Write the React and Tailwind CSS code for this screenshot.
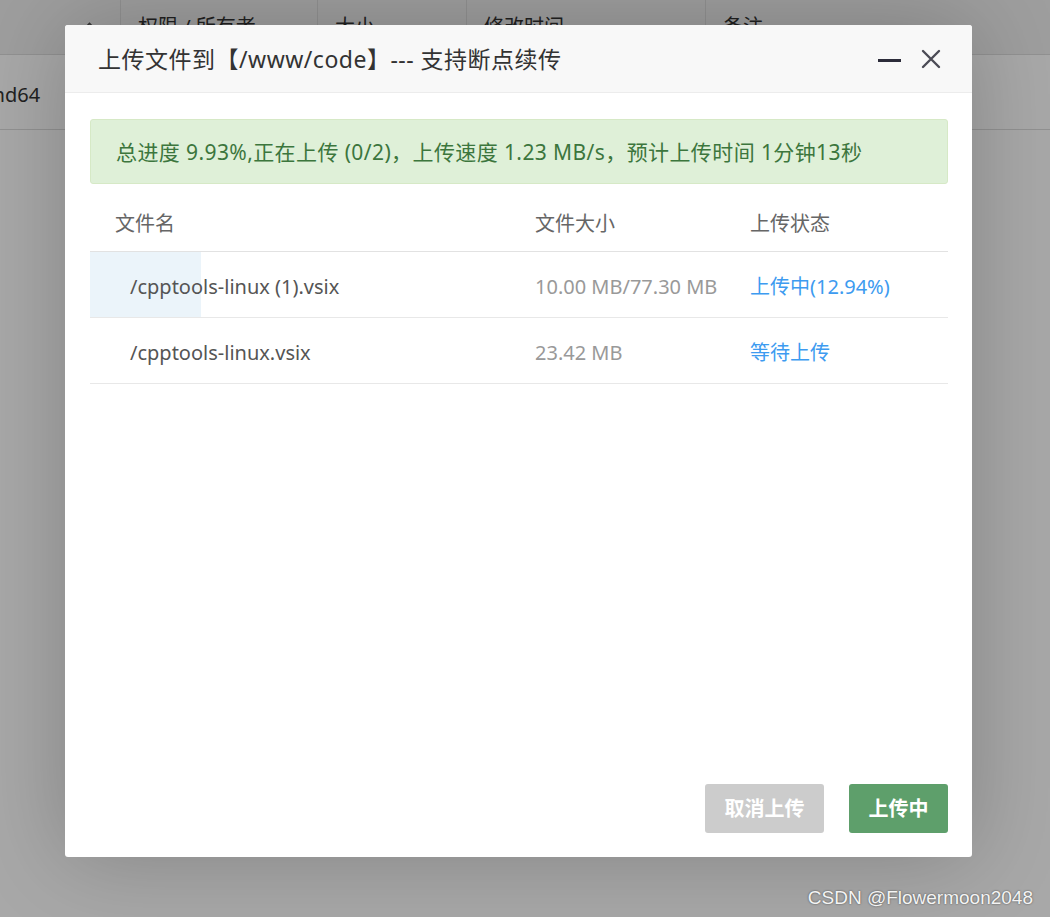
const files = [
  { name: '/cpptools-linux (1).vsix', size: '10.00 MB/77.30 MB', status: '上传中(12.94%)', progress: 12.94 },
  { name: '/cpptools-linux.vsix', size: '23.42 MB', status: '等待上传', progress: 0 },
];

const font = "font-['Noto_Sans','Noto_Sans_CJK_SC',sans-serif]";

function BackgroundPage() {
  return (
    <div className="text-[20px] text-[#333]">
      <div className="flex h-[55px] border-b border-[#ddd] bg-[#f0f0f0]">
        <div className="flex w-[120px] items-center justify-end pr-[22px] text-[#555]">
          <svg width="17" height="10" viewBox="0 0 17 10" fill="none" stroke="currentColor" strokeWidth="1.6">
            <path d="M1 9 L8.5 1.5 L16 9" />
          </svg>
        </div>
        <div className="flex w-[197px] items-center border-l border-[#ddd] pl-[17px]">权限 / 所有者</div>
        <div className="flex w-[149px] items-center border-l border-[#ddd] pl-[17px]">大小</div>
        <div className="flex w-[239px] items-center border-l border-[#ddd] pl-[17px]">修改时间</div>
        <div className="flex flex-1 items-center border-l border-[#ddd] pl-[17px]">备注</div>
      </div>
      <div className="flex h-[75px] items-center border-b border-[#ddd] bg-white pt-[6px]">
        <span className="-ml-[25px]">amd64</span>
      </div>
    </div>
  );
}

export default function App() {
  return (
    <div className={`relative h-[917px] w-[1050px] overflow-hidden bg-white ${font}`}>
      <BackgroundPage />
      <div className="absolute inset-0 bg-black/[0.34]" />

      <div className="absolute left-[65px] top-[25px] flex h-[832px] w-[907px] flex-col overflow-hidden rounded-[3px] bg-white shadow-[0_0_90px_rgba(0,0,0,0.22)]">
        <div className="flex h-[68px] shrink-0 items-center justify-between border-b border-[#ececec] bg-[#f8f8f8] pl-[33px] pr-[31px]">
          <span className="pt-[2px] text-[23px] tracking-[0.5px] text-[#333]">上传文件到【/www/code】--- 支持断点续传</span>
          <div className="flex items-center gap-[20px]">
            <span className="mt-[4px] block h-[3px] w-[23px] bg-[#2c2c3a]" />
            <svg width="20" height="20" viewBox="0 0 20 20" stroke="#4b4b55" strokeWidth="2.4" strokeLinecap="round">
              <path d="M2 2 L18 18 M18 2 L2 18" />
            </svg>
          </div>
        </div>

        <div className="flex flex-1 flex-col pl-[25px] pr-[24px] pt-[26px]">
          <div className="flex h-[65px] items-center rounded-[3px] border border-[#d6e9c6] bg-[#dff0d8] pl-[25px] pt-[2px] text-[21px] tracking-[0.4px] text-[#3c763d]">
            总进度 9.93%,正在上传 (0/2)，上传速度 1.23 MB/s，预计上传时间 1分钟13秒
          </div>

          <div className="mt-[10px] text-[20px]">
            <div className="grid h-[58px] grid-cols-[445px_215px_1fr] items-center border-b border-[#e2e2e2] pt-[2px] text-[#666]">
              <div className="pl-[25px]">文件名</div>
              <div>文件大小</div>
              <div>上传状态</div>
            </div>
            {files.map((f) => (
              <div key={f.name} className="relative h-[66px] border-b border-[#e8e8e8]">
                <div className="absolute inset-y-0 left-0 bg-[#ebf4fa]" style={{ width: `${f.progress}%` }} />
                <div className="relative grid h-full grid-cols-[445px_215px_1fr] items-center pt-[4px]">
                  <div className="pl-[40px] text-[#555]">{f.name}</div>
                  <div className="text-[#999]">{f.size}</div>
                  <div className="text-[#3d9bf0]">{f.status}</div>
                </div>
              </div>
            ))}
          </div>

          <div className="mt-auto flex justify-end gap-[25px] pb-[24px]">
            <button className="h-[49px] w-[119px] rounded-[3px] bg-[#cccccc] text-[20px] font-bold text-white">取消上传</button>
            <button className="h-[49px] w-[99px] rounded-[3px] bg-[#5e9f6b] text-[20px] font-bold text-white">上传中</button>
          </div>
        </div>
      </div>

      <div className="absolute bottom-[5px] right-[17px] font-['Liberation_Sans',sans-serif] text-[19px] text-[#f4f4f4] [text-shadow:0_0_2px_rgba(0,0,0,0.6)]">
        CSDN @Flowermoon2048
      </div>
    </div>
  );
}
